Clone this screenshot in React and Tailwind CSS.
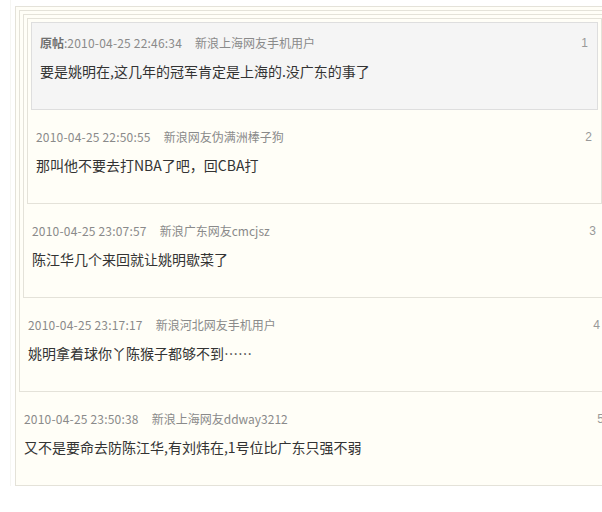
import React from 'react'

const posts = [
  { floor: 1, time: '2010-04-25 22:46:34', user: '新浪上海网友手机用户', text: '要是姚明在,这几年的冠军肯定是上海的.没广东的事了' },
  { floor: 2, time: '2010-04-25 22:50:55', user: '新浪网友伪满洲棒子狗', text: '那叫他不要去打NBA了吧，回CBA打' },
  { floor: 3, time: '2010-04-25 23:07:57', user: '新浪广东网友cmcjsz', text: '陈江华几个来回就让姚明歇菜了' },
  { floor: 4, time: '2010-04-25 23:17:17', user: '新浪河北网友手机用户', text: '姚明拿着球你丫陈猴子都够不到……' },
  { floor: 5, time: '2010-04-25 23:50:38', user: '新浪上海网友ddway3212', text: '又不是要命去防陈江华,有刘炜在,1号位比广东只强不弱' },
]

const font = { fontFamily: '"Noto Sans CJK SC", "Liberation Sans", sans-serif' }

function PostBody({ post }) {
  return (
    <div className="pt-[10px] pb-[26px] pl-2 pr-[9px]">
      <div className="flex items-center justify-between h-5 text-[12px] text-[#8a8a8a]">
        <span className="whitespace-nowrap">
          {post.floor === 1 && (
            <>
              <b className="font-bold text-[#707070]">原帖</b>:
            </>
          )}
          <span className="tracking-[0.2px]">{post.time}</span>
          <span className="ml-[13px]">{post.user}</span>
        </span>
        <span className="text-[12px] text-[#999]" style={{ fontFamily: '"Liberation Sans", sans-serif' }}>{post.floor}</span>
      </div>
      <div className="mt-[6px] h-6 leading-6 text-[14px] text-[#333] whitespace-nowrap">{post.text}</div>
    </div>
  )
}

function Floor({ index }) {
  const post = posts[index]
  if (index === 0) {
    return (
      <div className="border border-[#dedede] bg-[#f5f5f5]">
        <PostBody post={post} />
      </div>
    )
  }
  return (
    <div className="border border-[#e4e2d9] bg-[#fffef7] pt-[3px] px-[3px]">
      <div className="mb-[7px]">
        <Floor index={index - 1} />
      </div>
      <div className="-mx-[3px]">
        <PostBody post={post} />
      </div>
    </div>
  )
}

export default function App() {
  return (
    <div className="w-[602px] h-[512px] overflow-hidden bg-white" style={font}>
      <div className="ml-[10px] border-l border-[#f6f6f3] pl-[4px] pt-[6px] w-[604px]">
        <Floor index={posts.length - 1} />
      </div>
    </div>
  )
}
